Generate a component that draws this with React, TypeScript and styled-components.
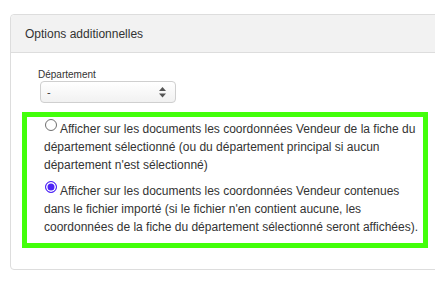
import React from "react";
import styled, { createGlobalStyle } from "styled-components";

const GlobalStyle = createGlobalStyle`
  html, body {
    margin: 0;
    padding: 0;
    background: #ffffff;
  }
  body {
    font-family: "Liberation Sans", Arial, Helvetica, sans-serif;
    color: #333333;
    overflow: hidden;
  }
`;

const Page = styled.div`
  width: 435px;
  height: 282px;
  overflow: hidden;
  padding: 14px 0 0 10px;
  box-sizing: border-box;
`;

const Panel = styled.section`
  width: 440px;
  border: 1px solid #dddddd;
  border-radius: 4px;
  background: #ffffff;
  box-sizing: border-box;
`;

const PanelHeader = styled.header`
  height: 37px;
  display: flex;
  align-items: center;
  padding-left: 14px;
  background: #f2f2f2;
  border-bottom: 1px solid #dddddd;
  border-radius: 4px 4px 0 0;
  font-size: 12px;
  color: #333333;
`;

const PanelBody = styled.div`
  padding: 15px 0 21px 11px;
`;

const FieldGroup = styled.div`
  padding-left: 16px;
  display: flex;
  flex-direction: column;
  align-items: flex-start;
`;

const FieldLabel = styled.label`
  font-size: 10px;
  line-height: 13px;
  color: #333333;
`;

const SelectWrap = styled.div`
  position: relative;
  width: 136px;
  height: 22px;
  margin-left: 2px;
`;

const Select = styled.select`
  appearance: none;
  -webkit-appearance: none;
  width: 100%;
  height: 100%;
  box-sizing: border-box;
  border: 1px solid #cfcfcf;
  border-radius: 4px;
  background: linear-gradient(#ffffff, #f1f1f1);
  font-family: "Liberation Sans", Arial, sans-serif;
  font-size: 11px;
  color: #333333;
  padding: 0 0 0 6px;
  outline: none;
`;

const Arrows = styled.svg`
  position: absolute;
  right: 10px;
  top: 6px;
  pointer-events: none;
`;

const Highlight = styled.div`
  margin-top: 9px;
  width: 406px;
  box-sizing: border-box;
  border: 5px solid #42ff0a;
  padding: 2px 2px 7px 17px;
  display: flex;
  flex-direction: column;
  gap: 7px;
`;

const RadioLabel = styled.label`
  display: block;
  font-size: 12px;
  line-height: 18px;
  color: #333333;
`;

const Radio = styled.input`
  appearance: none;
  -webkit-appearance: none;
  width: 12px;
  height: 12px;
  margin: 0 3px 0 1px;
  vertical-align: 2px;
  box-sizing: border-box;
  border-radius: 50%;
  border: 1px solid #6f6f6f;
  background: #ffffff;

  &:checked {
    border-color: #4d24f6;
    background: #4d24f6;
    box-shadow: inset 0 0 0 1.5px #ffffff;
  }
`;

export default function App() {
  return (
    <>
      <GlobalStyle />
      <Page>
        <Panel>
          <PanelHeader>Options additionnelles</PanelHeader>
          <PanelBody>
            <FieldGroup>
              <FieldLabel htmlFor="dept">Département</FieldLabel>
              <SelectWrap>
                <Select id="dept" defaultValue="-">
                  <option value="-">-</option>
                </Select>
                <Arrows width="7" height="11" viewBox="0 0 7 11">
                  <path d="M3.5 0 L7 4 L0 4 Z" fill="#555555" />
                  <path d="M0 6.5 L7 6.5 L3.5 10.5 Z" fill="#555555" />
                </Arrows>
              </SelectWrap>
            </FieldGroup>
            <Highlight>
              <RadioLabel>
                <Radio type="radio" name="coord" />
                Afficher sur les documents les coordonnées Vendeur de la fiche du
                département sélectionné (ou du département principal si aucun
                département n'est sélectionné)
              </RadioLabel>
              <RadioLabel>
                <Radio type="radio" name="coord" defaultChecked />
                Afficher sur les documents les coordonnées Vendeur contenues dans le
                fichier importé (si le fichier n'en contient aucune, les coordonnées
                de la fiche du département sélectionné seront affichées).
              </RadioLabel>
            </Highlight>
          </PanelBody>
        </Panel>
      </Page>
    </>
  );
}
